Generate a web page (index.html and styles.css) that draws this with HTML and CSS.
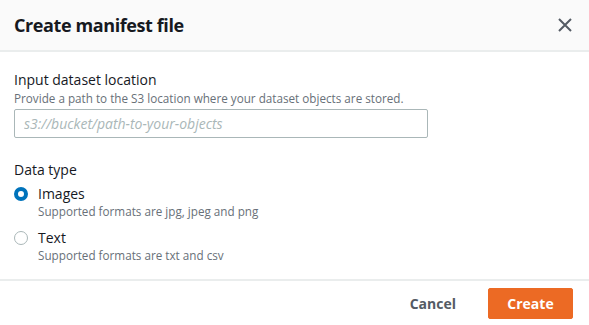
FILE: index.html
```html
<!DOCTYPE html>
<html lang="en">
  <head>
    <meta charset="UTF-8" />
    <meta name="viewport" content="width=device-width, initial-scale=1.0" />
    <title>Create manifest file</title>
    <link rel="stylesheet" href="styles.css">
  </head>

  <body>
    <div class="modal">
      <div class="modal-header">
        <div class="modal-title">Create manifest file</div>
        <button class="close-button" type="button" aria-label="Close">
          <svg width="14" height="14" viewBox="0 0 14 14">
            <path d="M1 1 L13 13 M13 1 L1 13" stroke="#545b64" stroke-width="2" fill="none" />
          </svg>
        </button>
      </div>

      <div class="modal-body">
        <div class="field">
          <div class="field-label">Input dataset location</div>
          <div class="field-desc">Provide a path to the S3 location where your dataset objects are stored.</div>
          <input type="text" class="text-input" placeholder="s3://bucket/path-to-your-objects" />
        </div>

        <div class="field">
          <div class="field-label">Data type</div>
          <label class="radio-row">
            <span class="radio checked"></span>
            <span class="radio-text">
              <span class="radio-label">Images</span>
              <span class="radio-desc">Supported formats are jpg, jpeg and png</span>
            </span>
          </label>
          <label class="radio-row">
            <span class="radio"></span>
            <span class="radio-text">
              <span class="radio-label">Text</span>
              <span class="radio-desc">Supported formats are txt and csv</span>
            </span>
          </label>
        </div>
      </div>

      <div class="modal-footer">
        <button type="button" class="cancel-button">Cancel</button>
        <button type="button" class="create-button">Create</button>
      </div>
    </div>
  </body>
</html>
```

FILE: styles.css
```css
/* Page */
body {
  margin: 0;
  background-color: #ffffff;
  font-family: "Open Sans", "Noto Sans", sans-serif;
  color: #16191f;
}

.modal {
  width: 589px;
  height: 325px;
  display: flex;
  flex-direction: column;
  overflow: hidden;
}

/* Header */
.modal-header {
  height: 52px;
  flex-shrink: 0;
  box-sizing: border-box;
  padding: 0 14px;
  display: flex;
  align-items: center;
  justify-content: space-between;
  background-color: #fafafa;
  border-bottom: 2px solid #eaeded;
}

.modal-title {
  font-size: 18px;
  font-weight: bold;
  letter-spacing: -0.4px;
}

.close-button {
  width: 24px;
  height: 24px;
  margin-right: -2px;
  padding: 0;
  border: none;
  background: none;
  display: flex;
  align-items: center;
  justify-content: center;
  cursor: pointer;
}

/* Body */
.modal-body {
  flex: 1;
  min-height: 0;
  padding: 18px 14px 0;
}

.field + .field {
  margin-top: 22px;
}

.field-label {
  font-size: 14px;
  line-height: 20px;
}

.field-desc {
  font-size: 11.7px;
  line-height: 16px;
  color: #687078;
}

.text-input {
  width: 414px;
  height: 29px;
  margin-top: 3px;
  padding: 0 9px;
  box-sizing: border-box;
  border: 1px solid #aab7b8;
  border-radius: 2px;
  font-family: inherit;
  font-size: 14px;
}

.text-input::placeholder {
  color: #aab7b8;
  font-style: italic;
}

/* Radios */
.radio-row {
  display: flex;
  align-items: flex-start;
  margin-top: 5px;
  cursor: pointer;
}

.radio-row + .radio-row {
  margin-top: 10px;
}

.radio {
  width: 14px;
  height: 14px;
  margin-top: 2px;
  margin-right: 10px;
  box-sizing: border-box;
  border: 1px solid #aab7b8;
  border-radius: 50%;
  flex-shrink: 0;
}

.radio.checked {
  border: 4px solid #0073bb;
}

.radio-text {
  display: flex;
  flex-direction: column;
}

.radio-label {
  font-size: 14px;
  line-height: 18px;
}

.radio-desc {
  font-size: 11.7px;
  line-height: 16px;
  color: #687078;
}

/* Footer */
.modal-footer {
  height: 46px;
  flex-shrink: 0;
  box-sizing: border-box;
  border-top: 2px solid #eaeded;
  display: flex;
  align-items: center;
  justify-content: flex-end;
  padding: 0 16px 0 0;
  gap: 12px;
}

.cancel-button {
  height: 31px;
  padding: 0 20px;
  border: none;
  background: none;
  font-family: inherit;
  font-size: 14px;
  font-weight: bold;
  color: #545b64;
  cursor: pointer;
}

.create-button {
  width: 85px;
  height: 31px;
  border: 1px solid #ec6a24;
  border-radius: 2px;
  background-color: #ec6a24;
  color: #ffffff;
  font-family: inherit;
  font-size: 14px;
  font-weight: bold;
  cursor: pointer;
}
```
